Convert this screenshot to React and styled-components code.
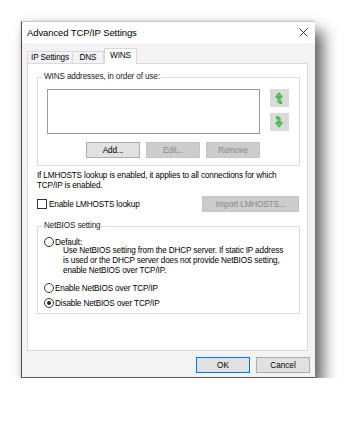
import React from 'react';
import styled, { createGlobalStyle } from 'styled-components';

const Global = createGlobalStyle`
  body {
    margin: 0;
    background: #ffffff;
    font-family: "Segoe UI", "Liberation Sans", Arial, sans-serif;
    color: #000;
  }
`

const Stage = styled.div`
  padding: 21px 0 0 21px;
`

const Window = styled.div`
  width: 294px;
  height: 357px;
  box-sizing: border-box;
  display: flex;
  flex-direction: column;
  border-top: 1px solid #c8c8c8;
  border-left: 1px solid #4a4a4a;
  border-bottom: 1px solid #5a5a5a;
  box-shadow: 8px 10px 14px rgba(0, 0, 0, 0.62), -1px -1px 5px rgba(0, 0, 0, 0.1);
  background: #f5f2f5;
`

const TitleBar = styled.div`
  height: 21px;
  background: #ffffff;
  display: flex;
  align-items: center;
  justify-content: space-between;
  padding: 0 7px 0 5px;
`

const Title = styled.span`
  font-size: 9.5px;
  letter-spacing: -0.1px;
`

const Body = styled.div`
  flex: 1;
  display: flex;
  flex-direction: column;
  padding: 5px 7px 4px 5px;
`

const TabRow = styled.div`
  display: flex;
  align-items: flex-end;
  height: 15px;
`

const Tab = styled.div`
  width: ${p => p.w}px;
  height: ${p => (p.active ? 16 : 12)}px;
  box-sizing: border-box;
  border: 1px solid #d9d9d9;
  border-bottom: none;
  border-left: ${p => (p.first || p.active ? '1px solid #d9d9d9' : 'none')};
  background: ${p => (p.active ? '#ffffff' : '#f5f2f5')};
  margin-bottom: ${p => (p.active ? '-1px' : '0')};
  position: relative;
  z-index: ${p => (p.active ? 1 : 0)};
  font-size: 8.2px;
  letter-spacing: -0.15px;
  display: flex;
  align-items: center;
  justify-content: center;
  padding-bottom: ${p => (p.active ? '2px' : '0')};
`

const Panel = styled.div`
  height: 288px;
  box-sizing: border-box;
  background: #ffffff;
  border: 1px solid #d9d9d9;
  padding: 8px 7px 0 9px;
  display: flex;
  flex-direction: column;
  font-size: 8.2px;
  letter-spacing: -0.15px;
`

const Group = styled.fieldset`
  margin: ${p => p.mt || 0}px 0 0 0;
  border: 1px solid #dcdcdc;
  padding: 0 8px ${p => p.pb}px ${p => p.pl}px;
  min-width: 0;
  display: flex;
  flex-direction: column;
`

const Legend = styled.legend`
  padding: 0 1px;
  margin-left: ${p => p.ml}px;
  font-size: 8.2px;
  line-height: 10px;
  color: #1a1a1a;
`

const ListRow = styled.div`
  display: flex;
  gap: 10px;
  margin-top: 7px;
`

const ListBox = styled.div`
  width: 213px;
  height: 45px;
  box-sizing: border-box;
  border: 1px solid #9a9a9a;
  background: #fff;
`

const ArrowCol = styled.div`
  display: flex;
  flex-direction: column;
  gap: 6px;
`

const ArrowBtn = styled.div`
  width: 19px;
  height: 18px;
  background: #dadada;
  display: flex;
  align-items: center;
  justify-content: center;
`

const ButtonRow = styled.div`
  width: 213px;
  display: flex;
  justify-content: flex-end;
  gap: 6px;
  margin-top: 8px;
`

const Button = styled.div`
  width: ${p => p.w || 54}px;
  height: 16px;
  box-sizing: border-box;
  border: 1px solid ${p => (p.primary ? '#0078d7' : p.disabled ? '#c4c4c4' : '#adadad')};
  background: ${p => (p.disabled ? '#cccccc' : '#e1e1e1')};
  color: ${p => (p.disabled ? '#8a8a8a' : '#000')};
  font-size: 8.2px;
  display: flex;
  align-items: center;
  justify-content: center;
`

const Note = styled.p`
  margin: 5px 0 0 0;
  line-height: 10px;
`

const CheckRow = styled.div`
  display: flex;
  align-items: center;
  justify-content: space-between;
  margin-top: 5px;
  padding-right: 1px;
`

const CheckLabel = styled.label`
  display: flex;
  align-items: center;
  gap: 2px;
`

const CheckBox = styled.span`
  width: 10px;
  height: 10px;
  box-sizing: border-box;
  border: 1px solid #333;
  background: #fff;
`

const RadioRow = styled.div`
  display: flex;
  align-items: center;
  gap: 1px;
  height: 10px;
  margin-top: ${p => p.mt}px;
`

const Radio = styled.span`
  width: 10px;
  height: 10px;
  box-sizing: border-box;
  border: 1px solid #333;
  border-radius: 50%;
  background: #fff;
  display: flex;
  align-items: center;
  justify-content: center;
  &::after {
    content: '';
    width: 4px;
    height: 4px;
    border-radius: 50%;
    background: ${p => (p.checked ? '#222' : 'transparent')};
  }
`

const Description = styled.div`
  margin: -1px 0 0 19px;
  line-height: 10px;
  white-space: nowrap;
`

const Footer = styled.div`
  display: flex;
  justify-content: flex-end;
  gap: 6px;
  margin: 6px -2px 0 0;
`

const UpIcon = () => (
  <svg width="11" height="12" viewBox="0 0 11 12">
    <path d="M5 4.5 V8.5 Q5 10.5 8 10.5" fill="none" stroke="#2f9e35" strokeWidth="3" />
    <path d="M5 4.5 V8.5 Q5 10.5 8 10.5" fill="none" stroke="#5ad35e" strokeWidth="1.6" />
    <path d="M5 0.8 L1.6 5.2 H8.4 Z" fill="#5ad35e" stroke="#2f9e35" strokeWidth="0.8" />
  </svg>
)

const DownIcon = () => (
  <svg width="11" height="12" viewBox="0 0 11 12">
    <path d="M2 1.5 Q5 1.5 5 3.5 V7.5" fill="none" stroke="#2f9e35" strokeWidth="3" />
    <path d="M2 1.5 Q5 1.5 5 3.5 V7.5" fill="none" stroke="#5ad35e" strokeWidth="1.6" />
    <path d="M5 11.2 L1.6 6.8 H8.4 Z" fill="#5ad35e" stroke="#2f9e35" strokeWidth="0.8" />
  </svg>
)

const CloseIcon = () => (
  <svg width="9" height="9" viewBox="0 0 9 9">
    <path d="M0.5 0.5 L8.5 8.5 M8.5 0.5 L0.5 8.5" stroke="#333" strokeWidth="1" />
  </svg>
)

const App = () => {
  return (
    <Stage>
      <Global />
      <Window>
        <TitleBar>
          <Title>Advanced TCP/IP Settings</Title>
          <CloseIcon />
        </TitleBar>
        <Body>
          <TabRow>
            <Tab w={46} first>IP Settings</Tab>
            <Tab w={31}>DNS</Tab>
            <Tab w={33} active>WINS</Tab>
          </TabRow>
          <Panel>
            <Group pl={9} pb={7}>
              <Legend ml={-4}>WINS addresses, in order of use:</Legend>
              <ListRow>
                <ListBox />
                <ArrowCol>
                  <ArrowBtn><UpIcon /></ArrowBtn>
                  <ArrowBtn><DownIcon /></ArrowBtn>
                </ArrowCol>
              </ListRow>
              <ButtonRow>
                <Button>Add...</Button>
                <Button disabled>Edit...</Button>
                <Button disabled>Remove</Button>
              </ButtonRow>
            </Group>

            <Note>
              If LMHOSTS lookup is enabled, it applies to all connections for which<br />
              TCP/IP is enabled.
            </Note>

            <CheckRow>
              <CheckLabel>
                <CheckBox />
                Enable LMHOSTS lookup
              </CheckLabel>
              <Button w={97} disabled>Import LMHOSTS...</Button>
            </CheckRow>

            <Group pl={6} pb={5} mt={9}>
              <Legend ml={-1}>NetBIOS setting</Legend>
              <RadioRow mt={6}>
                <Radio />
                Default:
              </RadioRow>
              <Description>
                Use NetBIOS setting from the DHCP server. If static IP address<br />
                is used or the DHCP server does not provide NetBIOS setting,<br />
                enable NetBIOS over TCP/IP.
              </Description>
              <RadioRow mt={7}>
                <Radio />
                Enable NetBIOS over TCP/IP
              </RadioRow>
              <RadioRow mt={5}>
                <Radio checked />
                Disable NetBIOS over TCP/IP
              </RadioRow>
            </Group>
          </Panel>
          <Footer>
            <Button primary>OK</Button>
            <Button>Cancel</Button>
          </Footer>
        </Body>
      </Window>
    </Stage>
  );
};

export default App;
